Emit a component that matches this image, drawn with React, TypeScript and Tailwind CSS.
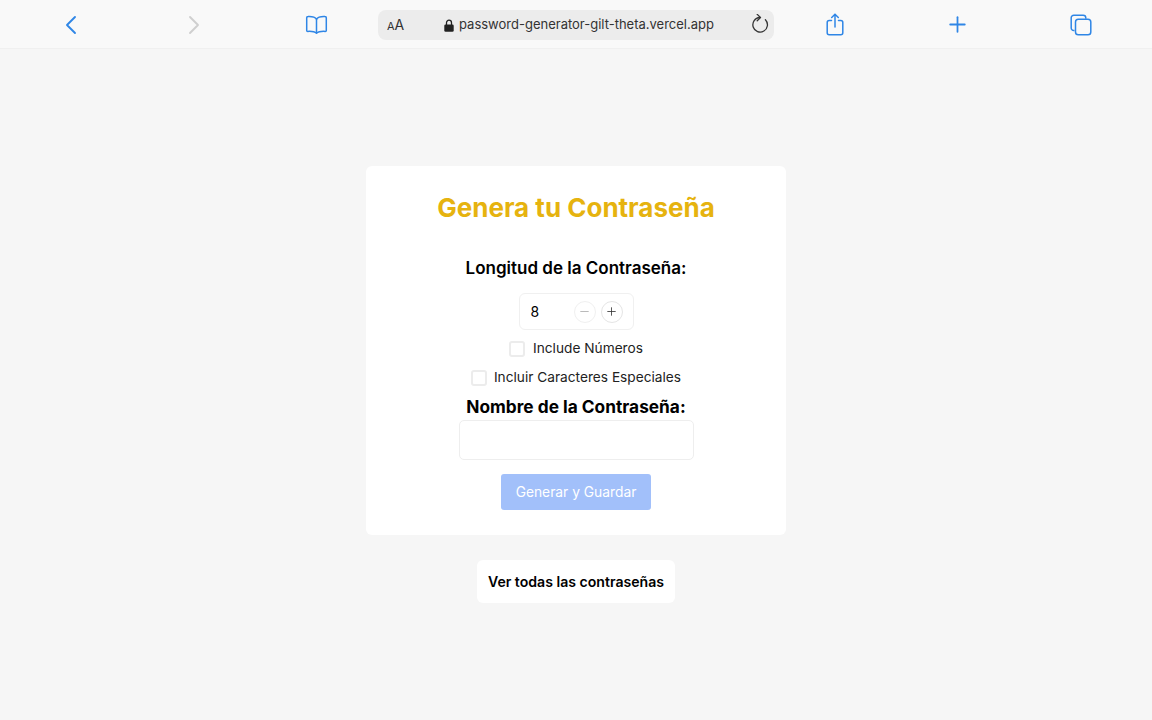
import { useState } from 'react';
import { ChevronLeft, ChevronRight, Minus, Plus } from 'lucide-react';

function BookIcon() {
  return (
    <svg width="23" height="20" viewBox="0 0 23 20" fill="none" stroke="#2f86e6" strokeWidth="1.5" strokeLinejoin="round" strokeLinecap="round">
      <path d="M11.5 4.2C10 2 7 1.4 3 1.6c-.8 0-1.3.5-1.3 1.2v12.6c0 .6.4 1 1 1 3.8-.2 6.8 0 8.8 1.9 2-1.900 5-2.100 8.800-1.900.6 0 1-.4 1-1V2.800c0-.7-.5-1.200-1.300-1.200-4-.2-7 .4-8.500 2.600Z" />
      <path d="M11.500 4.200v13.500" />
    </svg>
  );
}

function ShareIcon() {
  return (
    <svg width="18" height="23" viewBox="0 0 18 23" fill="none" stroke="#2f86e6" strokeWidth="1.500" strokeLinecap="round" strokeLinejoin="round">
      <path d="M5.500 7.500H3.200C2 7.500 1.200 8.300 1.200 9.500v10.300c0 1.200.8 2 2 2h11.600c1.200 0 2-.8 2-2V9.500c0-1.200-.8-2-2-2h-2.300" />
      <path d="M9 14V1.500" />
      <path d="M5.700 4.500 9 1.200l3.300 3.300" />
    </svg>
  );
}

function TabsIcon() {
  return (
    <svg width="22" height="22" viewBox="0 0 22 22" fill="none" stroke="#2f86e6" strokeWidth="1.500" strokeLinejoin="round">
      <path d="M4.500 16.500H3.800c-1.500 0-2.600-1.100-2.600-2.600V3.800c0-1.500 1.100-2.600 2.600-2.600h9.400c1.500 0 2.600 1.100 2.600 2.600v1" />
      <rect x="5.500" y="5.200" width="15.300" height="15.600" rx="2.800" />
    </svg>
  );
}

function LockIcon() {
  return (
    <svg width="10" height="13" viewBox="0 0 10 13">
      <path d="M2.500 6V3.700a2.500 2.500 0 0 1 5 0V6" fill="none" stroke="#222" strokeWidth="1.300" />
      <rect x="0.300" y="5.400" width="9.400" height="7.300" rx="1.300" fill="#222" />
    </svg>
  );
}

function ReloadIcon() {
  return (
    <svg width="18" height="20" viewBox="0 0 18 20" fill="none" stroke="#333" strokeWidth="1.300" strokeLinecap="round" strokeLinejoin="round">
      <path d="M14.400 5.700A7.300 7.300 0 1 1 8.700 3.500" />
      <path d="M6.200 .4 9.500 3.500 6.200 6.800" />
    </svg>
  );
}

function NavSlot({ children }: { children: React.ReactNode }) {
  return <button className="flex items-center justify-center h-full">{children}</button>;
}

function TopBar() {
  return (
    <div className="h-[49px] shrink-0 bg-[#f9f9f9] border-b border-[#f0f0f0] flex px-[10px] pt-px">
      <div className="flex-1 grid grid-cols-3">
        <NavSlot><ChevronLeft className="w-8 h-8 text-[#2f86e6]" strokeWidth={1.4} /></NavSlot>
        <NavSlot><ChevronRight className="w-8 h-8 text-[#cfcfcf]" strokeWidth={1.4} /></NavSlot>
        <NavSlot><BookIcon /></NavSlot>
      </div>
      <div className="w-[396px] h-[30px] mt-[9px] rounded-lg bg-[#ececec] flex items-center pl-[9px] pr-[5px] text-[#333]">
        <span className="text-[14px] leading-none w-[57px]"><span className="text-[11px]">A</span>A</span>
        <LockIcon />
        <span className="ml-[5px] text-[13px] text-[#333] flex-1">password-generator-gilt-theta.vercel.app</span>
        <div className="mb-[3px]">
          <ReloadIcon />
        </div>
      </div>
      <div className="flex-1 grid grid-cols-3">
        <NavSlot><ShareIcon /></NavSlot>
        <NavSlot><Plus className="w-[25px] h-[25px] text-[#2f86e6]" strokeWidth={1.7} /></NavSlot>
        <NavSlot><TabsIcon /></NavSlot>
      </div>
    </div>
  );
}

export default function App() {
  const [length, setLength] = useState(8);
  const [numbers, setNumbers] = useState(false);
  const [special, setSpecial] = useState(false);
  const [name, setName] = useState('');

  return (
    <div className="h-[720px] flex flex-col bg-[#f6f6f6] text-black font-['Inter',sans-serif] overflow-hidden">
      <TopBar />
      <div className="flex flex-col items-center pt-[117px]">
        <div className="w-[420px] h-[369px] bg-white rounded-md flex flex-col items-center pt-[24px]">
          <h1 className="text-[26px] leading-[36px] font-bold text-[#e6b30f]">Genera tu Contraseña</h1>
          <label className="mt-[30px] text-[17px] leading-[24px] font-semibold">Longitud de la Contraseña:</label>
          <div className="mt-[13px] w-[115px] h-[37px] border border-[#f0f0f0] rounded-md flex items-center pl-[11px] pr-[10px]">
            <span className="text-[14px] flex-1">{length}</span>
            <div className="flex gap-[5px]">
              <button onClick={() => setLength(length - 1)} className="w-[22px] h-[22px] rounded-full border border-[#f0f0f0] flex items-center justify-center">
                <Minus className="w-[13px] h-[13px] text-[#aaa]" strokeWidth={1.5} />
              </button>
              <button onClick={() => setLength(length + 1)} className="w-[22px] h-[22px] rounded-full border border-[#e5e5e5] flex items-center justify-center">
                <Plus className="w-[13px] h-[13px] text-[#333]" strokeWidth={1.5} />
              </button>
            </div>
          </div>
          <label className="mt-[8px] h-[21px] flex items-center gap-[8px] text-[13.7px] text-[#222]">
            <input type="checkbox" checked={numbers} onChange={() => setNumbers(!numbers)} className="appearance-none w-4 h-4 rounded-[3px] border-2 border-[#ececec]" />
            Include Números
          </label>
          <label className="mt-[8px] h-[21px] flex items-center gap-[7px] text-[13.7px] text-[#222]">
            <input type="checkbox" checked={special} onChange={() => setSpecial(!special)} className="appearance-none w-4 h-4 rounded-[3px] border-2 border-[#ececec]" />
            Incluir Caracteres Especiales
          </label>
          <label className="mt-[6px] text-[17.3px] leading-[26px] font-bold">Nombre de la Contraseña:</label>
          <input value={name} onChange={(e) => setName(e.target.value)} className="w-[235px] h-[40px] border border-[#eeeeee] rounded-[5px] outline-none px-3 text-sm" />
          <button className="mt-[14px] w-[150px] h-[36px] rounded-[3px] bg-[#a2c0fa] text-white text-[13.8px]">Generar y Guardar</button>
        </div>
        <button className="mt-[25px] h-[43px] w-[198px] bg-white rounded-md text-[14.1px] font-semibold">Ver todas las contraseñas</button>
      </div>
    </div>
  );
}
